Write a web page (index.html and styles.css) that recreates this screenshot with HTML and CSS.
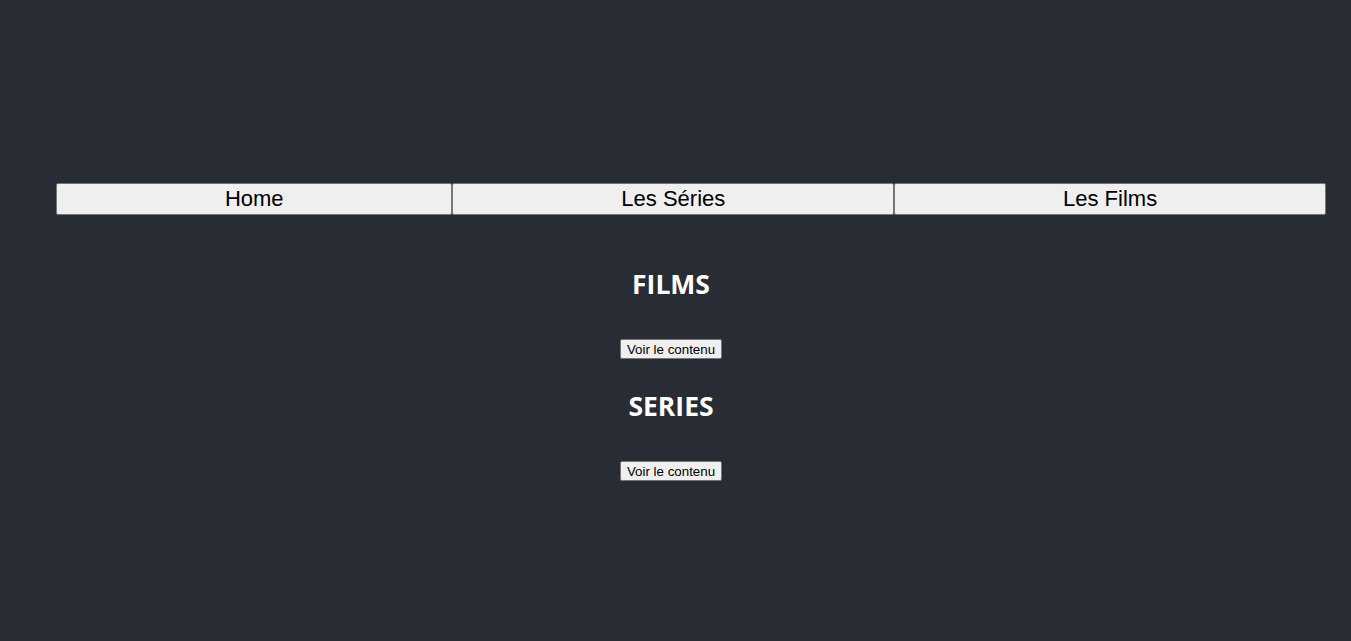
FILE: index.html
```html
<!DOCTYPE html>
<html lang="fr">
<head>
<meta charset="utf-8">
<title>Accueil</title>
<link rel="stylesheet" href="styles.css">
</head>
<body>
<div class="app">
  <nav class="nav">
    <button class="nav-btn">Home</button>
    <button class="nav-btn">Les Séries</button>
    <button class="nav-btn">Les Films</button>
  </nav>
  <main class="content">
    <section class="block">
      <h2 class="block-title">FILMS</h2>
      <div class="block-action"><button class="small-btn">Voir le contenu</button></div>
    </section>
    <section class="block">
      <h2 class="block-title">SERIES</h2>
      <div class="block-action"><button class="small-btn">Voir le contenu</button></div>
    </section>
  </main>
</div>
</body>
</html>
```
FILE: styles.css
```css
html, body {
  margin: 0;
  padding: 0;
  background: #282c34;
}
.app {
  min-height: 641px;
  padding-top: 183px;
  box-sizing: border-box;
  font-family: "Liberation Sans", Arial, sans-serif;
  color: #ffffff;
}
.nav {
  display: flex;
  margin: 0 25px 0 56px;
}
.nav-btn {
  flex: 1 1 auto;
  font-family: "Liberation Sans", Arial, sans-serif;
  font-size: 22px;
  line-height: 25px;
  height: 32px;
  padding: 0 6px 2px;
  margin: 0;
  color: #000;
  background: #efefef;
  border: 1px solid #767676;
  border-radius: 2px;
}
.content {
  display: flex;
  flex-direction: column;
  align-items: center;
  padding-top: 51px;
  padding-right: 9px;
}
.block {
  display: flex;
  flex-direction: column;
  align-items: center;
}
.block-title {
  font-family: "Open Sans", "Noto Sans", sans-serif;
  font-weight: 700;
  font-size: 26.5px;
  line-height: 37px;
  margin: 0 0 36px 0;
  color: #fff;
}
.block-action {
  margin-bottom: 29px;
}
.small-btn {
  font-family: "Liberation Sans", Arial, sans-serif;
  font-size: 13.33px;
  line-height: 15px;
  height: 20px;
  padding: 1px 6px;
  color: #000;
  background: #efefef;
  border: 1px solid #767676;
  border-radius: 2px;
}
```
